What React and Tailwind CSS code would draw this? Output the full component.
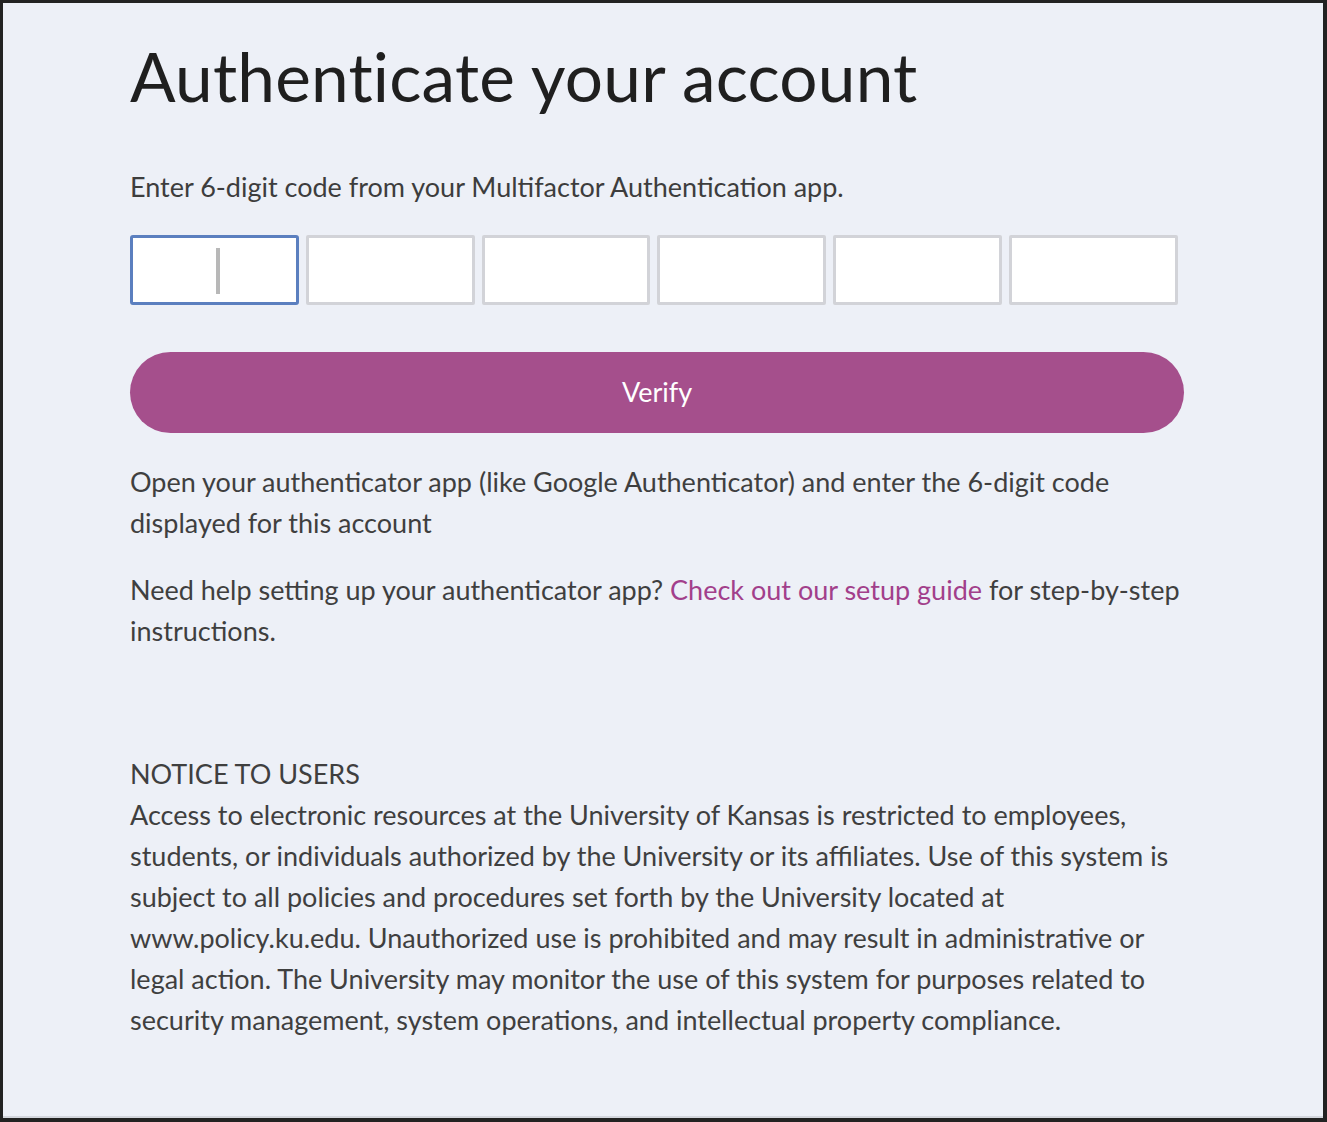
import React from 'react';

export default function App() {
  const digits = [0, 1, 2, 3, 4, 5];

  return (
    <div className="w-[1327px] h-[1122px] bg-[#222] pt-[3px] pl-[3px] pr-[4px] pb-[4px]" style={{ fontFamily: 'Lato, "Open Sans", sans-serif' }}>
      <div className="h-full bg-[#edf0f7] border-b-[2px] border-[#d3d6dd] pl-[127px] pr-[140px] pt-[33px]">
        <h1 className="text-[67.5px] leading-[80px] text-[#1f1f1f] tracking-[0.2px]">Authenticate your account</h1>

        <p className="mt-[56px] text-[27px] leading-[30px] text-[#3d3d3d]">
          Enter 6-digit code from your Multifactor Authentication app.
        </p>

        <div className="mt-[33px] flex gap-[7px] w-[1048px]">
          {digits.map((d) => (
            <div
              key={d}
              className={
                d === 0
                  ? 'relative flex-1 h-[70px] bg-white border-[3px] border-[#5b7fbf] rounded-[3px]'
                  : 'flex-1 h-[70px] bg-white border-[3px] border-[#d2d3d8] rounded-[2px]'
              }
            >
              {d === 0 && <span className="absolute left-[83px] top-[10px] w-[4px] h-[46px] bg-[#b8b8b8]" />}
            </div>
          ))}
        </div>

        <button className="mt-[47px] w-[1054px] h-[81px] rounded-full bg-[#a54f8c] text-white text-[27px]">
          Verify
        </button>

        <p className="mt-[28px] text-[27px] leading-[41px] text-[#3f3f3f]">
          Open your authenticator app (like Google Authenticator) and enter the 6-digit code
          <br />
          displayed for this account
        </p>

        <p className="mt-[26px] text-[27px] leading-[41px] text-[#3f3f3f]">
          Need help setting up your authenticator app?{' '}
          <a className="text-[#a23f8b]">Check out our setup guide</a> for step-by-step
          <br />
          instructions.
        </p>

        <div className="mt-[102px] text-[27px] leading-[41px] text-[#3f3f3f]">
          <p>NOTICE TO USERS</p>
          <p>
            Access to electronic resources at the University of Kansas is restricted to employees,
            <br />
            students, or individuals authorized by the University or its affiliates. Use of this system is
            <br />
            subject to all policies and procedures set forth by the University located at
            <br />
            www.policy.ku.edu. Unauthorized use is prohibited and may result in administrative or
            <br />
            legal action. The University may monitor the use of this system for purposes related to
            <br />
            security management, system operations, and intellectual property compliance.
          </p>
        </div>
      </div>
    </div>
  );
}
